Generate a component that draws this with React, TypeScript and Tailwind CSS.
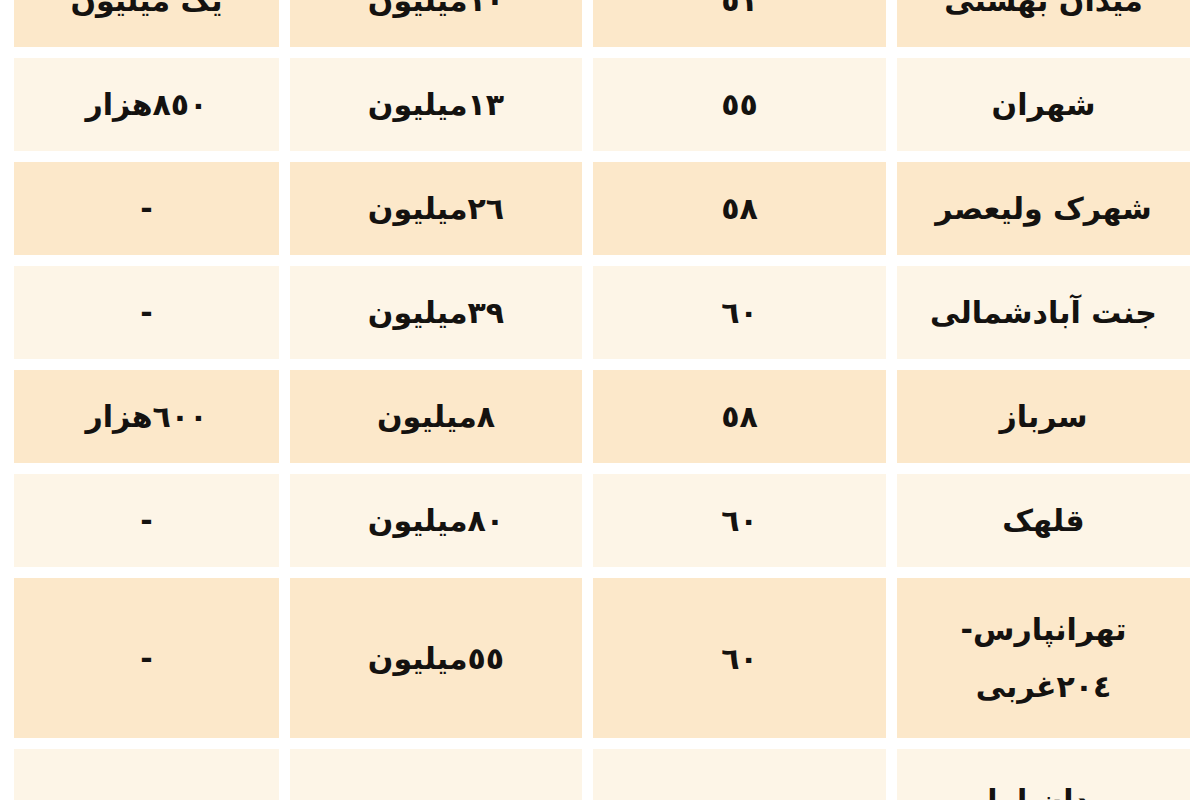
import React from 'react'

type Row = { area: string[]; size: string; price: string; rent: string; tall?: boolean }

const rows: Row[] = [
  { area: [ 'میدان بهشتی' ], size: '٥١', price: '١٠میلیون', rent: 'یک میلیون' },
  { area: [ 'شهران' ], size: '٥٥', price: '١٣میلیون', rent: '٨٥٠هزار' },
  { area: [ 'شهرک ولیعصر' ], size: '٥٨', price: '٢٦میلیون', rent: '-' },
  { area: [ 'جنت آبادشمالی' ], size: '٦٠', price: '٣٩میلیون', rent: '-' },
  { area: [ 'سرباز' ], size: '٥٨', price: '٨میلیون', rent: '٦٠٠هزار' },
  { area: [ 'قلهک' ], size: '٦٠', price: '٨٠میلیون', rent: '-' },
  { area: [ 'تهرانپارس-', '٢٠٤غربی' ], size: '٦٠', price: '٥٥میلیون', rent: '-', tall: true },
  { area: [ 'میدان امام', 'حسین' ], size: '٦٥', price: '٢٠میلیون', rent: '-', tall: true },
]

const Cell = ( { lines, bg, tall }: { lines: string[]; bg: string; tall?: boolean } ) => (
  <div className={ `${ bg } ${ tall ? 'h-[160px]' : 'h-[93px]' } flex flex-col items-center justify-center text-[#141210]` }>
    { lines.map( ( l ) => (
      <span key={ l } className='leading-[57px] whitespace-nowrap'>{ l }</span>
    ) ) }
  </div>
)

export default function App() {
  return (
    <div className='w-[1200px] h-[800px] overflow-hidden bg-white'>
      <div
        dir='rtl'
        className='mt-[-46px] pr-[10px] grid grid-cols-[293px_293px_292px_265px] gap-x-[11px] gap-y-[11px] text-[30px] font-bold'
        style={ { fontFamily: '"DejaVu Sans", sans-serif' } }
      >
        { rows.map( ( r, i ) => {
          const bg = i % 2 === 0 ? 'bg-[#fce8ca]' : 'bg-[#fdf5e7]'
          return (
            <React.Fragment key={ i }>
              <Cell lines={ r.area } bg={ bg } tall={ r.tall }/>
              <Cell lines={ [ r.size ] } bg={ bg } tall={ r.tall }/>
              <Cell lines={ [ r.price ] } bg={ bg } tall={ r.tall }/>
              <Cell lines={ [ r.rent ] } bg={ bg } tall={ r.tall }/>
            </React.Fragment>
          )
        } ) }
      </div>
    </div>
  )
}
